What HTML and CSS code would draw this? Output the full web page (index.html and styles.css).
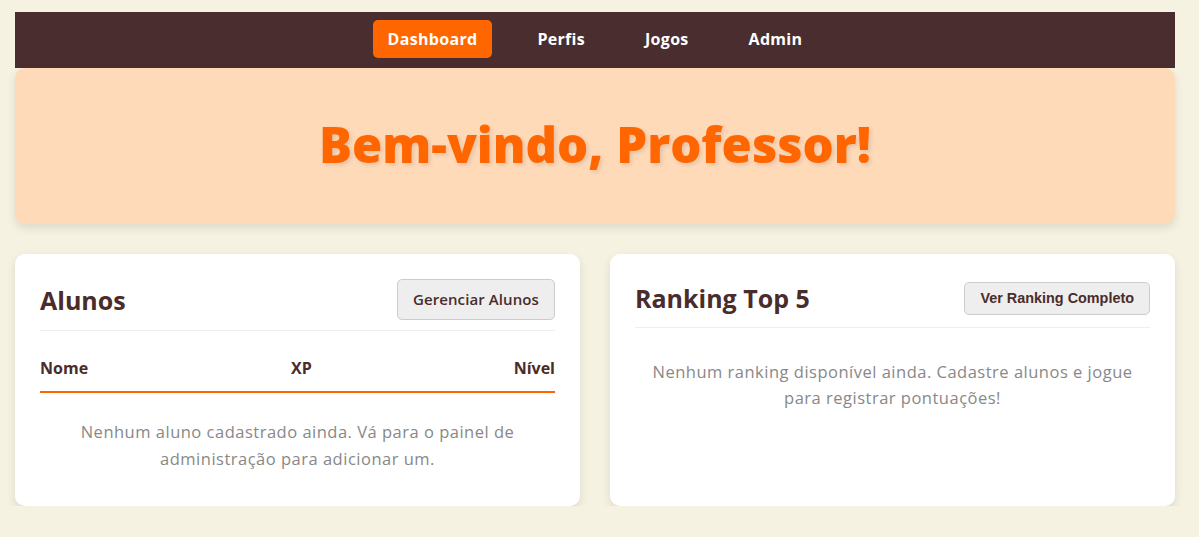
FILE: index.html
```html
<!DOCTYPE html>
<html lang="pt-BR">
<head>
<meta charset="utf-8">
<title>Dashboard</title>
<link rel="stylesheet" href="styles.css">
</head>
<body>
<div class="page">
  <nav class="navbar">
    <ul class="nav-list">
      <li><a class="nav-link active" href="#">Dashboard</a></li>
      <li><a class="nav-link" href="#">Perfis</a></li>
      <li><a class="nav-link" href="#">Jogos</a></li>
      <li><a class="nav-link" href="#">Admin</a></li>
    </ul>
  </nav>
  <header class="hero">
    <h1 class="hero-title">Bem-vindo, Professor!</h1>
  </header>
  <main class="cards">
    <section class="card">
      <div class="card-header">
        <h2 class="card-title">Alunos</h2>
        <a class="btn btn-manage" href="#">Gerenciar Alunos</a>
      </div>
      <table class="table">
        <thead>
          <tr><th class="col-left">Nome</th><th class="col-center">XP</th><th class="col-right">Nível</th></tr>
        </thead>
      </table>
      <p class="empty empty-students">Nenhum aluno cadastrado ainda. Vá para o painel de administração para adicionar um.</p>
    </section>
    <section class="card">
      <div class="card-header">
        <h2 class="card-title">Ranking Top 5</h2>
        <button class="btn btn-ranking" type="button">Ver Ranking Completo</button>
      </div>
      <p class="empty empty-ranking">Nenhum ranking disponível ainda. Cadastre alunos e jogue para registrar pontuações!</p>
    </section>
  </main>
</div>
</body>
</html>
```

FILE: styles.css
```css
* { box-sizing: border-box; }

body {
  margin: 0;
  background: #f6f2e2;
  font-family: "Open Sans", "Noto Sans", "DejaVu Sans", sans-serif;
  color: #4a2c2a;
}

.page {
  width: 1160px;
  margin: 12px 0 0 15px;
}

.navbar {
  background: #4a2e2f;
  height: 56px;
  display: flex;
  align-items: center;
  justify-content: center;
}

.nav-list {
  list-style: none;
  margin: 0;
  padding: 0;
  display: flex;
  gap: 30px;
  position: relative;
  top: -1px;
}

.nav-link {
  display: block;
  padding: 8px 15px;
  color: #ffffff;
  text-decoration: none;
  font-weight: 700;
  font-size: 16px;
  letter-spacing: 0.3px;
  line-height: 22px;
  border-radius: 5px;
}

.nav-link.active {
  background: #ff6600;
}

.hero {
  background: #ffdab9;
  border-radius: 10px;
  height: 156px;
  display: flex;
  align-items: center;
  justify-content: center;
  box-shadow: 0 4px 10px rgba(0, 0, 0, 0.1);
}

.hero-title {
  margin: 0;
  color: #ff6600;
  font-size: 49px;
  font-weight: 800;
  text-shadow: 2px 2px 4px rgba(0, 0, 0, 0.12);
  position: relative;
  top: -2px;
}

.cards {
  margin-top: 30px;
  display: grid;
  grid-template-columns: 1fr 1fr;
  gap: 30px;
}

.card {
  background: #ffffff;
  border-radius: 10px;
  padding: 25px;
  height: 252px;
  box-shadow: 0 4px 10px rgba(0, 0, 0, 0.1);
}

.card-header {
  display: flex;
  justify-content: space-between;
  align-items: center;
  padding-bottom: 10px;
  border-bottom: 1px solid #eeeeee;
}

.card-title {
  margin: 0;
  font-size: 25px;
  line-height: 38px;
  font-weight: 700;
  color: #4a2c2a;
}

.btn {
  background: #eeeeee;
  border: 1px solid #cccccc;
  border-radius: 5px;
  color: #4a2c2a;
  text-decoration: none;
  cursor: pointer;
}

.btn-manage {
  display: inline-block;
  padding: 9px 15px;
  font-size: 15px;
  letter-spacing: 0.1px;
  line-height: 21px;
  font-weight: 600;
}

.btn-ranking {
  padding: 8px 15px;
  font-family: "Liberation Sans", Arial, sans-serif;
  font-size: 14.4px;
  font-weight: 700;
  line-height: 15px;
}

.table {
  width: 100%;
  border-collapse: collapse;
  margin-top: 14px;
}

.table th {
  padding: 12px 0;
  font-size: 16px;
  line-height: 22px;
  font-weight: 700;
  color: #4a2c2a;
  border-bottom: 2px solid #ff6600;
}

.col-left { text-align: left; width: 35.5%; }
.col-center { text-align: center; width: 30.5%; }
.col-right { text-align: right; width: 34%; }

.empty {
  margin: 0;
  text-align: center;
  color: #888888;
  font-size: 16.5px;
  letter-spacing: 0.5px;
  line-height: 27px;
}

.empty-students {
  padding: 25px 0 0;
}

.empty-ranking {
  margin-top: 31px;
  line-height: 26px;
}
```
